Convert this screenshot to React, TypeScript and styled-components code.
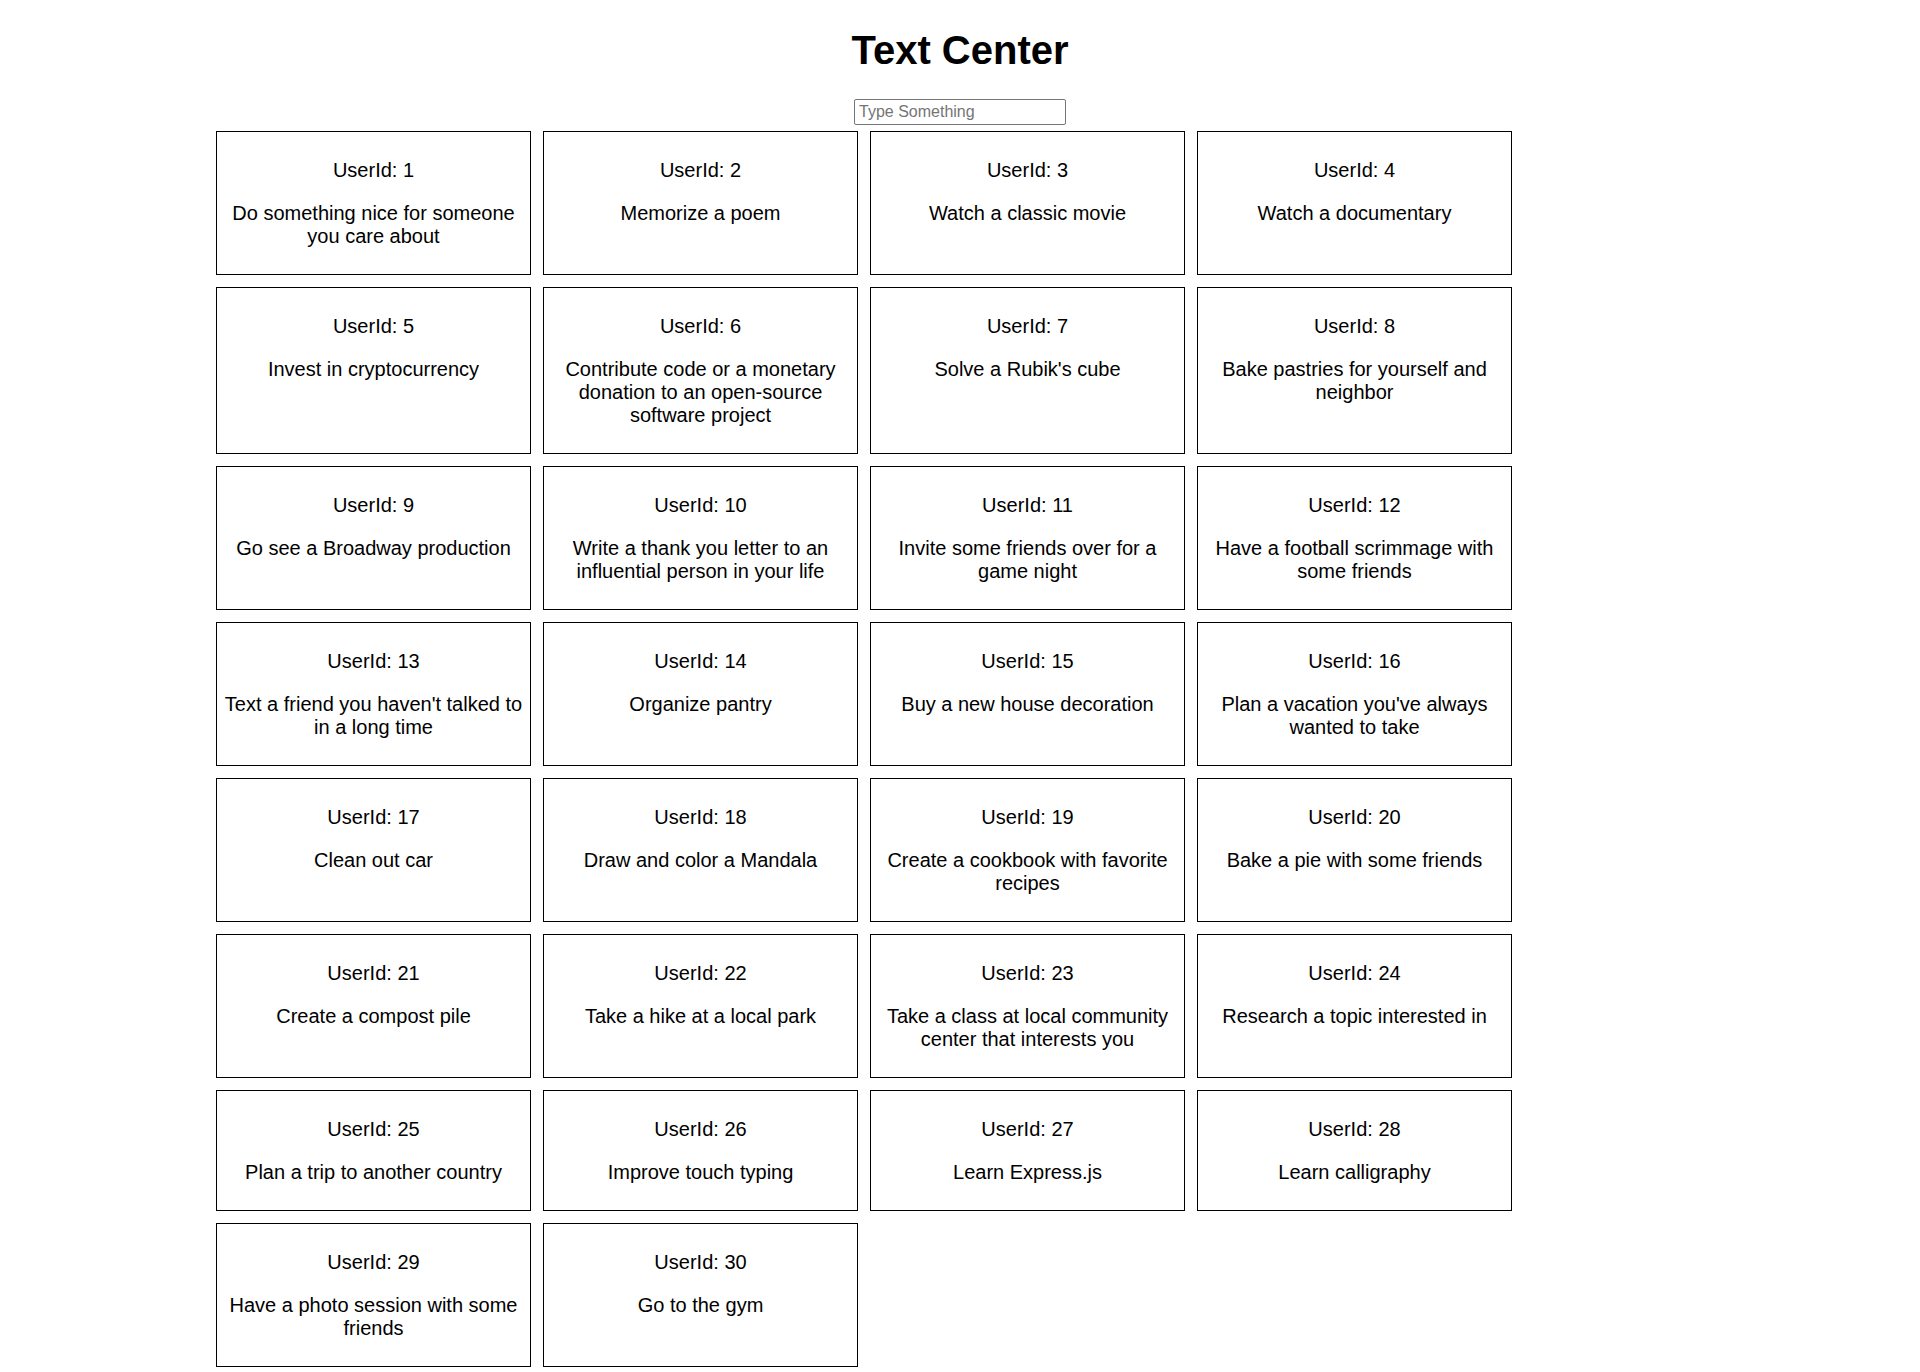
import React, { useState } from "react";
import styled, { createGlobalStyle } from "styled-components";

const GlobalStyle = createGlobalStyle`
  html, body {
    margin: 0;
    padding: 0;
    background: #ffffff;
  }
  body {
    font-family: "Liberation Sans", Arial, sans-serif;
    color: #000000;
  }
  * {
    box-sizing: border-box;
  }
`;

const Page = styled.div`
  display: flex;
  flex-direction: column;
  padding: 27px 0 5px;
`;

const Title = styled.h1`
  margin: 0 0 26px;
  font-size: 40px;
  line-height: 46px;
  font-weight: 700;
  text-align: center;
`;

const SearchInput = styled.input`
  display: block;
  align-self: center;
  width: 212px;
  height: 26px;
  margin: 0;
  padding: 1px 4px;
  border: 1px solid #767676;
  border-radius: 2px;
  font-family: "Liberation Sans", Arial, sans-serif;
  font-size: 16px;
  color: #000;
  outline: none;
  &::placeholder {
    color: #757575;
  }
`;

const CardGrid = styled.div`
  display: grid;
  grid-template-columns: repeat(4, 315px);
  gap: 12px;
  margin: 6px 0 0 216px;
`;

const Card = styled.div`
  border: 1px solid #000;
  padding: 7px 6px 6px;
  text-align: center;
  font-size: 20px;
  line-height: 23px;
`;

const Line = styled.p`
  margin: 20px 0;
`;

const todos: string[] = [
  "Do something nice for someone you care about",
  "Memorize a poem",
  "Watch a classic movie",
  "Watch a documentary",
  "Invest in cryptocurrency",
  "Contribute code or a monetary donation to an open-source software project",
  "Solve a Rubik's cube",
  "Bake pastries for yourself and neighbor",
  "Go see a Broadway production",
  "Write a thank you letter to an influential person in your life",
  "Invite some friends over for a game night",
  "Have a football scrimmage with some friends",
  "Text a friend you haven't talked to in a long time",
  "Organize pantry",
  "Buy a new house decoration",
  "Plan a vacation you've always wanted to take",
  "Clean out car",
  "Draw and color a Mandala",
  "Create a cookbook with favorite recipes",
  "Bake a pie with some friends",
  "Create a compost pile",
  "Take a hike at a local park",
  "Take a class at local community center that interests you",
  "Research a topic interested in",
  "Plan a trip to another country",
  "Improve touch typing",
  "Learn Express.js",
  "Learn calligraphy",
  "Have a photo session with some friends",
  "Go to the gym",
];

export default function App() {
  const [query, setQuery] = useState("");
  const items = todos
    .map((todo, i) => ({ id: i + 1, todo }))
    .filter((t) => t.todo.toLowerCase().includes(query.toLowerCase()));

  return (
    <>
      <GlobalStyle />
      <Page>
        <Title>Text Center</Title>
        <SearchInput
          type="text"
          placeholder="Type Something"
          value={query}
          onChange={(e) => setQuery(e.target.value)}
        />
        <CardGrid>
          {items.map((t) => (
            <Card key={t.id}>
              <Line>UserId: {t.id}</Line>
              <Line>{t.todo}</Line>
            </Card>
          ))}
        </CardGrid>
      </Page>
    </>
  );
}
